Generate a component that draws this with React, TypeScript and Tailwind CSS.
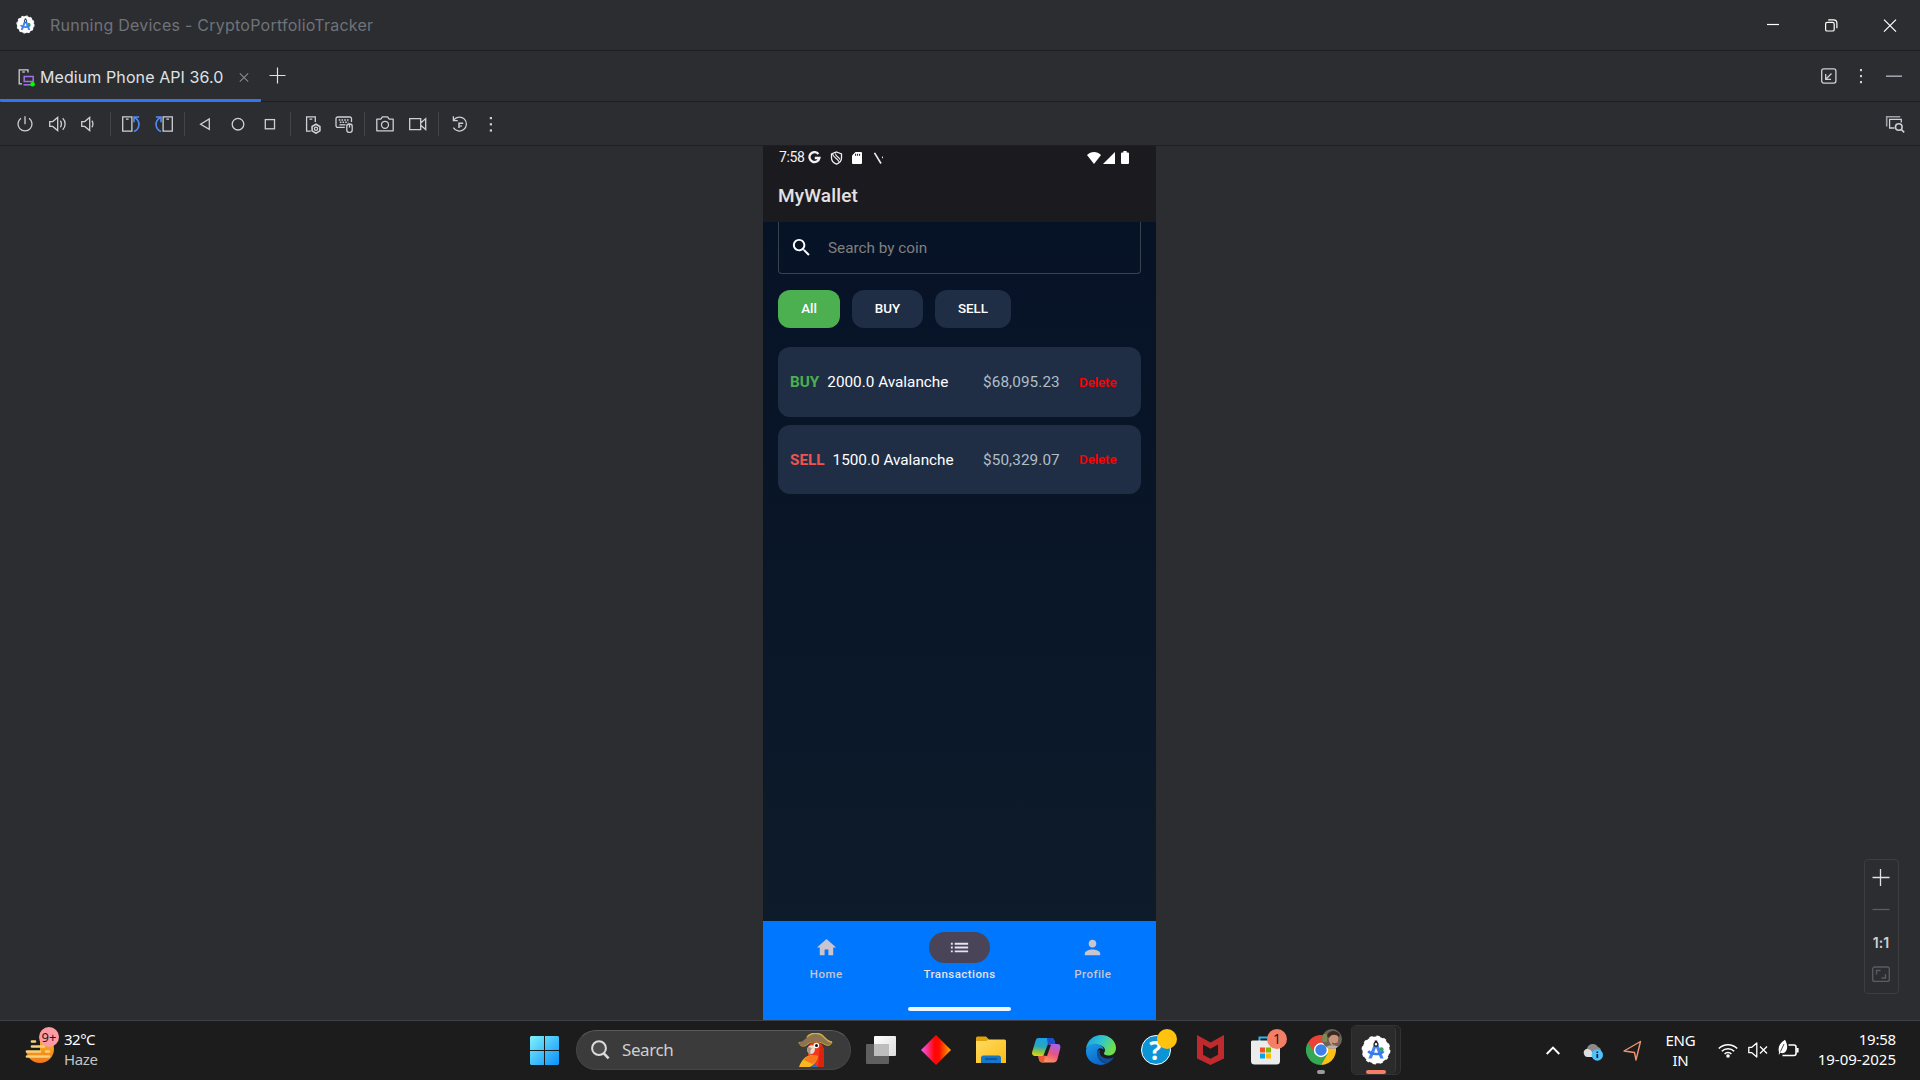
import React from "react";

type IconProps = { className?: string; children: React.ReactNode; size?: number };

/* Stroke icon on a 20px grid, used across the IDE chrome */
function Ico({ className = "", children, size = 20 }: IconProps) {
  return (
    <svg
      className={"shrink-0 " + className}
      width={size}
      height={size}
      viewBox={`0 0 ${size} ${size}`}
      fill="none"
      stroke="#ced0d6"
      strokeWidth={1.3}
    >
      {children}
    </svg>
  );
}

function Material({ d, fill, className = "" }: { d: string; fill: string; className?: string }) {
  return (
    <svg className={"shrink-0 " + className} width="23" height="23" viewBox="0 0 24 24" fill={fill}>
      <path d={d} />
    </svg>
  );
}

const HOME = "M10 20v-6h4v6h5v-8h3L12 3 2 12h3v8z";
const LIST =
  "M3 13h2v-2H3v2zm0 4h2v-2H3v2zm0-8h2V7H3v2zm4 4h14v-2H7v2zm0 4h14v-2H7v2zM7 7v2h14V7H7z";
const PERSON =
  "M12 12c2.21 0 4-1.79 4-4s-1.79-4-4-4-4 1.79-4 4 1.79 4 4 4zm0 2c-2.67 0-8 1.34-8 4v2h16v-2c0-2.66-5.33-4-8-4z";
const SEARCH =
  "M15.5 14h-.79l-.28-.27C15.41 12.59 16 11.11 16 9.5 16 5.91 13.09 3 9.5 3S3 5.91 3 9.5 5.91 16 9.5 16c1.61 0 3.09-.59 4.23-1.57l.27.28v.79l5 4.99L20.49 19l-4.99-5zm-6 0C7.01 14 5 11.99 5 9.5S7.01 5 9.5 5 14 7.01 14 9.5 11.99 14 9.5 14z";

function StudioLogo({ size }: { size: number }) {
  return (
    <svg className="shrink-0" width={size} height={size} viewBox="0 0 30 30">
      <circle cx="15" cy="15" r="13.6" fill="#fff" />
      <circle cx="15" cy="15" r="13.6" fill="none" stroke="#fff" strokeWidth="1.6" strokeDasharray="3.4 3.72" />
      <circle cx="20.3" cy="14.6" r="2.4" fill="#34a853" />
      <path d="M13.4 8h3.2l6 15.5h-3.4L15 12.5l-4.200 11H7.400z" fill="#4285f4" />
      <path d="M7.200 16.200C10.500 20 19.500 20 22.500 16.200" stroke="#3b78e7" strokeWidth="2.600" fill="none" />
      <path d="M13.700 5.500h2.600v3h-2.600z" fill="#222" />
      <circle cx="15" cy="9.300" r="1.900" fill="#fff" stroke="#222" strokeWidth="1.300" />
    </svg>
  );
}

function TitleBar() {
  return (
    <header className="flex h-[51px] items-center border-b border-[#1e1f22] pb-px pl-[15.5px]">
      <StudioLogo size={19} />
      <span className="ml-[15.5px] text-[16px] tracking-[0.24px] text-[#6f737a]">
        Running Devices - CryptoPortfolioTracker
      </span>
      <div className="ml-auto flex items-center">
        <Ico className="mr-[38px]">
          <path d="M4 9.5h12" stroke="#fff" strokeWidth="1.2" />
        </Ico>
        <Ico className="mr-[39px]">
          <rect x="4.6" y="7.4" width="8.6" height="8.6" rx="1.6" stroke="#fff" strokeWidth="1.2" />
          <path d="M7.2 4.9h5.3a3.4 3.4 0 0 1 3.400 3.400v5" stroke="#fff" strokeWidth="1.2" />
        </Ico>
        <Ico className="mr-[20px]">
          <path d="M4 4.700l12 12M16 4.700l-12 12" stroke="#fff" strokeWidth="1.2" />
        </Ico>
      </div>
    </header>
  );
}

function TabRow() {
  return (
    <div className="flex h-[51px] items-stretch border-b border-[#1e1f22]">
      <div className="-mb-px flex w-[261px] shrink-0 items-center rounded-b-[1px] border-b-[3px] border-[#3574f0] pl-4 pt-[3px]">
        <Ico>
          <path d="M12 5.5V2.8H3.2v14H6" />
          <path d="M6.3 5h2.5" />
          <path d="M8.2 14.5v-5h9v5z" stroke="#a571e6" strokeWidth="1.5" />
          <path d="M7.5 17.8h8" stroke="#a571e6" strokeWidth="1.5" />
          <circle cx="16.6" cy="17.3" r="2.3" fill="#0f0" stroke="none" />
        </Ico>
        <span className="ml-1 whitespace-nowrap text-[16px] tracking-[0.09px] text-[#dfe1e5]">Medium Phone API 36.0</span>
        <Ico className="ml-[10px]">
          <path d="M5.8 6.3l8.4 8.4M14.2 6.3l-8.4 8.4" stroke="#868a91" strokeWidth="1.1" />
        </Ico>
      </div>
      <Ico className="ml-[7px] mt-[14px]">
        <path d="M9.5 2.5v16M1.5 10.5h16" stroke="#dfe1e5" strokeWidth="1.2" />
      </Ico>
      <div className="ml-auto flex items-center">
        <Ico className="mr-[12px]">
          <rect x="2.7" y="2.9" width="14.2" height="14.2" rx="2" />
          <path d="M12.500 7.500l-5.200 5.200M6.700 8v5.300h5.300" />
        </Ico>
        <Ico className="mr-[13px]">
          <g fill="#ced0d6" stroke="none">
            <rect x="9" y="3" width="2" height="2.2" />
            <rect x="9" y="9" width="2" height="2.2" />
            <rect x="9" y="15" width="2" height="2.2" />
          </g>
        </Ico>
        <Ico className="mr-[16px]">
          <path d="M2 10.2h16" stroke="#9da0a8" strokeWidth="1.6" />
        </Ico>
      </div>
    </div>
  );
}

function Sep({ className }: { className: string }) {
  return <div className={"h-6 w-px shrink-0 bg-[#43454a] " + className} />;
}

function Toolbar() {
  return (
    <div className="flex h-[44px] items-center border-b border-[#1e1f22] pl-[15px]">
      <Ico>
        <path d="M6 4.2a7 7 0 1 0 8 0M10 2.3v8" />
      </Ico>
      <Ico className="ml-[13px]">
        <path d="M1.7 7.6h3l5-4.2v13.2l-5-4.2h-3zM12.3 6.8c1.5 1.5 1.5 4.9 0 6.4M14.7 4.2c3.2 3 3.2 8.6 0 11.6" />
      </Ico>
      <Ico className="ml-[10px]">
        <path d="M3.7 7.6h3l5-4.2v13.2l-5-4.2h-3zM13.8 6.8c1.5 1.5 1.5 4.9 0 6.4" />
      </Ico>
      <Sep className="ml-[12px]" />
      <Ico className="ml-[10px]">
        <path d="M1.7 2.8h9.2v14.4H1.7zM5 5.2h2.6" />
        <path d="M13 17.5c6.2-2.6 6.6-10 1-13.8M13 8.2V3h5.2" stroke="#548af7" strokeWidth="1.6" />
      </Ico>
      <Ico className="ml-[13px]">
        <path d="M9.1 2.8h9.2v14.4H9.1zM12.4 5.2H15" />
        <path d="M7 17.5C.8 14.9.4 7.5 6 3.7M7 8.2V3H1.8" stroke="#548af7" strokeWidth="1.6" />
      </Ico>
      <Sep className="ml-[10px]" />
      <Ico className="ml-[10px]">
        <path d="M14.3 5v10.4L5.6 10.2z" />
      </Ico>
      <Ico className="ml-[13px]">
        <circle cx="10" cy="10.2" r="5.8" />
      </Ico>
      <Ico className="ml-[12px]">
        <rect x="5.3" y="5.6" width="9.2" height="9.2" />
      </Ico>
      <Sep className="ml-[10px]" />
      <Ico className="ml-[12px]">
        <path d="M12.3 8V2.8H3.6v14.4h4.2M6.5 5.2h2.8" />
        <path d="M13 10.2l3.9 2.3v4.4L13 19.2l-3.9-2.3v-4.4z" strokeWidth="1.6" />
        <circle cx="13" cy="14.7" r="1.6" />
      </Ico>
      <Ico className="ml-[11px]">
        <path d="M17.5 8V4.6a1.6 1.6 0 0 0-1.6-1.6H3.6A1.6 1.6 0 0 0 2 4.6v7.2a1.6 1.6 0 0 0 1.6 1.6h7.2" />
        <path d="M4.8 5.9h10.5M5.8 8.2h8.5" strokeDasharray="1.6 1.1" strokeWidth="1.5" />
        <path d="M5.5 10.8h6" />
        <rect x="12.8" y="10" width="5.4" height="8.3" rx="2.2" />
        <path d="M15.5 10v3.6" />
      </Ico>
      <Sep className="ml-[10px]" />
      <Ico className="ml-[10px]">
        <path d="M1.8 5.2h4l1.6-2.4h5.2l1.6 2.4h4v11.6H1.8z" strokeLinejoin="round" />
        <circle cx="10" cy="10.8" r="3.5" />
      </Ico>
      <Ico className="ml-[13px]">
        <path d="M1.7 4.6h11v11H1.7zM12.7 9l5-4.4v11l-5-4.4" />
      </Ico>
      <Sep className="ml-[10px]" />
      <Ico className="ml-[11px]">
        <path d="M4 5.6a7 7 0 1 1-.6 8M3.4 2.2v4.4h4.4" />
        <path d="M9 14V9.300h4.200" strokeWidth="1.5" />
        <path d="M9.500 12h2.500" strokeWidth="1.200" />
      </Ico>
      <Ico className="ml-[11px]">
        <g fill="#ced0d6" stroke="none">
          <rect x="8.8" y="3" width="2.2" height="2.2" />
          <rect x="8.8" y="9.2" width="2.2" height="2.2" />
          <rect x="8.8" y="15.4" width="2.2" height="2.2" />
        </g>
      </Ico>
      <Ico className="ml-auto mr-[15px]">
        <path d="M1.7 12.5V2.8h13.6" stroke="#9da0a8" strokeWidth="1.6" />
        <path d="M9.5 14H4.6V5.4h11.7v3.2" />
        <circle cx="13.8" cy="13" r="3.3" strokeWidth="1.6" />
        <path d="M16.2 15.4l3 3" strokeWidth="1.6" />
      </Ico>
    </div>
  );
}

function StatusBar() {
  return (
    <div className="flex h-[23px] items-center pl-4 text-[14px] text-[#f2f2f2]">
      <span className="w-[28px] tracking-[-0.4px]">7:58</span>
      <svg className="ml-px" width="13" height="13" viewBox="0 0 13 13" fill="none" stroke="#f2f2f2" strokeWidth="2.3">
        <path d="M10.4 3A5 5 0 1 0 11.4 7H6.8" />
      </svg>
      <svg className="ml-[9px]" width="13" height="14" viewBox="0 0 13 14" fill="none" stroke="#f2f2f2" strokeWidth="1.3">
        <path d="M6.5 1l5 1.9v4c0 3-2 5-5 6.2-3-1.2-5-3.2-5-6.2v-4z" />
        <path d="M2.5 2.800c1 4 4.500 4 6.500 8M5.500 2.500c0 3 3 3 4.500 6" strokeWidth="1.100" />
      </svg>
      <svg className="ml-[9px]" width="10" height="12" viewBox="0 0 10 12" fill="#fff">
        <path d="M3.5 0H9a1 1 0 0 1 1 1v10a1 1 0 0 1-1 1H1a1 1 0 0 1-1-1V3.6z" />
        <path d="M3.6 1.8v2M5.6 1.8v2M7.6 1.8v2" stroke="#1b1b1f" strokeWidth="1" />
      </svg>
      <svg className="ml-[12px]" width="10" height="12" viewBox="0 0 10 12" stroke="#eee" fill="none">
        <path d="M.5.8L7 11.5" strokeWidth="1.6" />
        <path d="M8.5 4.6v1.6" strokeWidth="1" />
      </svg>
      <svg className="ml-auto" width="14" height="12" viewBox="0 0 14 12" fill="#fff">
        <path d="M0 3C4 -1 10 -1 14 3L7 12z" />
      </svg>
      <svg className="ml-[2px]" width="12" height="12" viewBox="0 0 12 12" fill="#fff">
        <path d="M12 0v12H0z" />
      </svg>
      <svg className="ml-[6px] mr-[27px]" width="8" height="13" viewBox="0 0 8 13" fill="#fff">
        <path d="M2.4 0h3.2v1.4H7a1 1 0 0 1 1 1V12a1 1 0 0 1-1 1H1a1 1 0 0 1-1-1V2.4a1 1 0 0 1 1-1h1.4z" />
      </svg>
    </div>
  );
}

function Row({ kind, color, text, price }: { kind: string; color: string; text: string; price: string }) {
  return (
    <div className="flex h-[69.5px] items-center rounded-[12px] bg-[#1f2e45] pl-[12px] pr-[24px] pt-[2px] text-[15.3px]">
      <span className={"font-bold " + color}>{kind}</span>
      <span className="ml-2 text-white">{text}</span>
      <span className="ml-auto w-[96px] tracking-[0.1px] text-[#b0bec5]">{price}</span>
      <span className="w-[38px] text-[13.4px] font-medium tracking-[-0.1px] text-[#ff0000]">Delete</span>
    </div>
  );
}

function NavItem({ d, label, active }: { d: string; label: string; active?: boolean }) {
  return (
    <div className="flex flex-1 flex-col items-center pt-[11px]">
      <div
        className={
          active
            ? "flex h-[31px] w-[61px] items-center justify-center rounded-full bg-[#4a4458]"
            : "flex h-[31px] w-[61px] items-center justify-center"
        }
      >
        <Material d={d} fill={active ? "#e8def8" : "#cac4d0"} />
      </div>
      <span
        className={
          active
            ? "mt-[3px] text-[11.5px] leading-4 font-medium tracking-[0.45px] text-[#e6e1e5]"
            : "mt-[3px] text-[11.5px] leading-4 font-medium tracking-[0.45px] text-[#cac4d0]"
        }
      >
        {label}
      </span>
    </div>
  );
}

function Phone() {
  return (
    <div className="flex h-[874px] w-[393px] flex-col bg-gradient-to-b from-[#061125] to-[#0e1c2b] font-['Roboto',sans-serif]">
      <div className="h-[76px] bg-[#1b1b1f]">
        <StatusBar />
        <div className="flex h-[55px] items-center pl-[15px] text-[19px] font-medium tracking-[0.15px] text-[#e4e2e6]">
          MyWallet
        </div>
      </div>
      <div className="flex flex-1 flex-col px-[15px]">
        <div className="flex h-[52px] items-center rounded-b-[4px] border border-t-0 border-[#37434f] pl-[11px]">
          <Material d={SEARCH} fill="#fff" />
          <span className="ml-[15px] pt-[2px] text-[15.3px] text-[#808080]">Search by coin</span>
        </div>
        <div className="mt-4 flex gap-3 text-[13.4px] font-medium text-white">
          <div className="flex h-[38px] w-[62px] items-center justify-center rounded-[12px] bg-[#4caf50]">All</div>
          <div className="flex h-[38px] w-[71px] items-center justify-center rounded-[12px] bg-[#1f2e45]">BUY</div>
          <div className="flex h-[38px] w-[76px] items-center justify-center rounded-[12px] bg-[#1f2e45]">SELL</div>
        </div>
        <div className="mt-[19px] flex flex-col gap-[8px]">
          <Row kind="BUY" color="text-[#4caf50]" text="2000.0 Avalanche" price="$68,095.23" />
          <Row kind="SELL" color="text-[#ef5350]" text="1500.0 Avalanche" price="$50,329.07" />
        </div>
      </div>
      <nav className="flex h-[99px] flex-col bg-[#0077ff]">
        <div className="flex gap-[7px]">
          <NavItem d={HOME} label="Home" />
          <NavItem d={LIST} label="Transactions" active />
          <NavItem d={PERSON} label="Profile" />
        </div>
        <div className="mt-auto mb-[9px] h-[4px] w-[103px] self-center rounded-full bg-[#eef5ff]" />
      </nav>
    </div>
  );
}

function ZoomPanel() {
  return (
    <div className="flex h-[135px] w-[35px] flex-col items-center rounded-[4px] border border-[#3c3e42]">
      <Ico className="mt-[7px] mr-px">
        <path d="M9.5 2v17M1.5 10.5h17" stroke="#dfe1e5" />
      </Ico>
      <Ico className="mt-[12px] mr-px">
        <path d="M1.5 10.5h17" stroke="#5a5d63" />
      </Ico>
      <span className="mt-[14px] mr-px text-[14px] leading-5 font-semibold tracking-[0.1px] text-[#ced0d6]">1:1</span>
      <Ico className="mt-[12px] mr-px">
        <rect x="1.7" y="2" width="16.6" height="14.4" rx="2" stroke="#5a5d63" />
        <path d="M5.5 9.5v-4h4M14.5 9v4h-4" stroke="#5a5d63" />
      </Ico>
    </div>
  );
}

function Cell({ children }: { children: React.ReactNode }) {
  return <div className="flex h-full w-[55px] shrink-0 items-center justify-center">{children}</div>;
}

function Parrot() {
  return (
    <svg className="ml-auto mr-[17px]" width="35" height="34" viewBox="0 0 35 34">
      <path d="M10 14c2-6 14-7 15 1l1 19H10z" fill="#f4371c" />
      <path d="M22 12l4 3v19h-6z" fill="#d92410" />
      <path d="M1 34C4 25 10 20 20 23c-1 6-5 9-8 11z" fill="#f9b81d" />
      <path d="M6 27c3-4 8-6 14-4-1 4-3 7-6 8z" fill="#f8791c" />
      <path d="M12 34l5-3 3 3z" fill="#2d6fb5" />
      <path d="M10 14c3-3 7-2 7 2 0 3-2 5-4 5-3 0-5-4-3-7z" fill="#e8dccb" />
      <path d="M10 14c-2 3 0 7 3 8-1-3-1-5 1-7z" fill="#a8977c" />
      <circle cx="18.3" cy="12.5" r="2.8" fill="#fff" />
      <circle cx="18.5" cy="12.5" r="1.5" fill="#111" />
      <path d="M1 9c4 0 6-3 8-5 4-5 13-5 17 0 2 2 4 5 8 5-1 4-5 5-8 2-5-4-12-4-16 0-3 3-8 2-9-2z" fill="#8d7352" />
      <path d="M9 4c4-5 13-5 17 0 2 2 4 5 8 5" stroke="#d8b13c" strokeWidth="1.3" fill="none" />
      <path d="M1 9c0 4 5 6 9 2 4-3 11-3 16 0 3 2 7 2 8-2" stroke="#c9a13a" strokeWidth="1" fill="none" />
    </svg>
  );
}

function Taskbar() {
  return (
    <footer className="relative flex h-[60px] items-center border-t border-[#3f4043] bg-[#1c1c1c] pb-px font-['Noto_Sans',sans-serif] text-[15px] text-white">
      <div className="relative ml-[24px] h-[40px] w-[36px]">
        <svg width="36" height="40" viewBox="0 0 36 40">
          <defs>
            <linearGradient id="sun" x1="0" y1="0" x2="0" y2="1">
              <stop offset="0" stopColor="#fbc21a" />
              <stop offset="1" stopColor="#f2761c" />
            </linearGradient>
          </defs>
          <circle cx="16" cy="19" r="14" fill="url(#sun)" />
          <path d="M0 4h16v17H0z" fill="#1c1c1c" />
          <path d="M8 11.5h3M8 16.500h12M3 21.500h13M22 21.500h3M3 26.500h22" stroke="#f3d27c" strokeWidth="2.7" strokeLinecap="round" />
        </svg>
        <span className="absolute left-[15px] top-[-3px] flex h-5 w-5 items-center justify-center rounded-full bg-[#ff99a4] text-[13px] leading-none text-[#1c1c1c]">
          9+
        </span>
      </div>
      <div className="mb-[3px] ml-[4px] w-[60px] leading-[20px]">
        <div className="tracking-[-0.500px]">32°C</div>
        <div className="tracking-[-0.400px] text-[#c4c4c4]">Haze</div>
      </div>

      <svg className="ml-[406px] shrink-0" width="29" height="29" viewBox="0 0 29 29">
        <defs>
          <linearGradient id="win" x1="0" y1="0" x2="1" y2="1">
            <stop offset="0" stopColor="#7ff3fb" />
            <stop offset="1" stopColor="#0a8ffb" />
          </linearGradient>
        </defs>
        <path d="M1 0h13v14H0V1zM15 0h13l1 1v13H15zM0 15h14v14H1l-1-1zM15 15h14v13l-1 1H15z" fill="url(#win)" />
      </svg>

      <div className="ml-[17px] flex h-[40px] w-[275px] shrink-0 items-center rounded-full border border-t-[#5a5a5a] border-[#464646] bg-[#3b3b3b] pl-[14px]">
        <svg width="19" height="20" viewBox="0 0 19 20" fill="none" stroke="#dcdcdc">
          <circle cx="8" cy="8.2" r="6.9" strokeWidth="2" fill="#4c4c4c" />
          <path d="M12.8 13.4l4.8 5" strokeWidth="2.6" />
        </svg>
        <span className="ml-[12px] text-[17px] tracking-[-0.4px] text-[#cfcfcf]">Search</span>
        <Parrot />
      </div>

      <div className="ml-[2px] flex h-full shrink-0 items-center">
        <Cell>
          <svg width="30" height="28" viewBox="0 0 30 28">
            <defs>
              <linearGradient id="tv" x1="0" y1="0" x2="1" y2="1">
                <stop offset="0" stopColor="#fff" />
                <stop offset="1" stopColor="#dcdcdc" />
              </linearGradient>
            </defs>
            <rect x="8" y="0" width="22" height="20" rx="1" fill="url(#tv)" />
            <rect x="0" y="8" width="23" height="20" rx="1" fill="#5f5f5f" />
            <path d="M8 8h15v12H8z" fill="#bdbdbd" />
          </svg>
        </Cell>
        <Cell>
          <svg width="30" height="30" viewBox="0 0 30 30">
            <defs>
              <linearGradient id="dia" x1="0" y1="0" x2="1" y2="0">
                <stop offset="0" stopColor="#f25cff" />
                <stop offset="0.45" stopColor="#ff0505" />
                <stop offset="0.6" stopColor="#ff0a00" />
                <stop offset="1" stopColor="#ffb300" />
              </linearGradient>
            </defs>
            <path d="M15 0l15 15-15 15L0 15z" fill="url(#dia)" />
          </svg>
        </Cell>
        <Cell>
          <svg width="30" height="28" viewBox="0 0 30 28">
            <defs>
              <linearGradient id="fold" x1="0" y1="0" x2="1" y2="1">
                <stop offset="0" stopColor="#ffdb63" />
                <stop offset="1" stopColor="#fbbc14" />
              </linearGradient>
            </defs>
            <path d="M0 2a1.5 1.5 0 0 1 1.500-1.500h8.500l3 3v4H0z" fill="#e0a106" />
            <path d="M0 5h10l3-1.500h15.500a1.500 1.500 0 0 1 1.500 1.500V27H0z" fill="url(#fold)" />
            <path d="M5 27v-5a2.500 2.500 0 0 1 2.500-2.500h15a2.500 2.500 0 0 1 2.500 2.500v5z" fill="#1577c9" />
            <path d="M9 23h12" stroke="#0b4a86" strokeWidth="1.400" />
          </svg>
        </Cell>
        <Cell>
          <svg className="ml-px" width="29" height="26" viewBox="0 0 29 26">
            <defs>
              <linearGradient id="cpa" x1="0.3" y1="0" x2="0.1" y2="1">
                <stop offset="0" stopColor="#1aa0ea" />
                <stop offset="0.45" stopColor="#2aa7b8" />
                <stop offset="0.75" stopColor="#8cc63f" />
                <stop offset="1" stopColor="#f7d00a" />
              </linearGradient>
              <linearGradient id="cpb" x1="0.8" y1="0" x2="0.3" y2="1">
                <stop offset="0" stopColor="#a660f0" />
                <stop offset="0.5" stopColor="#e8557d" />
                <stop offset="1" stopColor="#ffa05a" />
              </linearGradient>
            </defs>
            <path d="M6 1h13c2 0 3 1 3.500 3l.8 3h-4c-2 0-3 1-3.600 3L13 17c-.7 2-1.500 2-3.500 2H3c-2.500 0-3.500-2-2.700-4.500L3.500 4C4 2 5 1 6 1z" fill="url(#cpa)" />
            <path d="M15 1h4c2 0 3 1 3.500 3l.8 3h-4c-1.600 0-2.600.6-3.300 2z" fill="#1d4fd0" />
            <path d="M19 7h6.500c2.500 0 3.500 2 2.700 4.500L25.500 22c-.6 2.500-2 3.500-4 3.500H10.500c-2 0-3-1-3.500-3L6.300 19H10c2 0 3-1 3.500-3L16 9c.5-1.500 1.500-2 3-2z" fill="url(#cpb)" />
            <path d="M6.300 19H10c1.600 0 2.600-.7 3.200-2l-1.200 8.500h-1.500c-2 0-3-1-3.500-3z" fill="#ee5a37" />
            <path d="M15.800 7.500l3.200.3L15 19 11.500 18.500z" fill="#1c1c1c" />
          </svg>
        </Cell>
        <Cell>
          <svg width="30" height="30" viewBox="0 0 30 30">
            <defs>
              <linearGradient id="edg" x1="0" y1="0" x2="1" y2="0.4">
                <stop offset="0" stopColor="#1c9be0" />
                <stop offset="0.55" stopColor="#2fc5cf" />
                <stop offset="1" stopColor="#6fe04a" />
              </linearGradient>
              <linearGradient id="edb" x1="0" y1="0" x2="0.5" y2="1">
                <stop offset="0" stopColor="#1a9de8" />
                <stop offset="1" stopColor="#0b66c9" />
              </linearGradient>
            </defs>
            <path d="M0 14C1 5 8 0 15 0c9 0 15 6.500 15 13 0 5-3.500 7.500-7.500 7.500-3.500 0-5-1.500-4.500-2.500 2-2.500 1-6-3-7.500C9 8.500 3 9.500 0 14z" fill="url(#edg)" />
            <path d="M0 15C1.500 9.500 8 7.500 13 9.500c3 1.200 4.500 3 4.500 5-4-3-7 0-6.500 4C11.500 24 16 28 21 28.500 11 33-1 26 0 15z" fill="url(#edb)" />
            <path d="M11 17c-.5 6 5 10 10 11.500 3-1.500 5.500-3.500 7-6.500-3.500 2-8 2-11 .3-3-1.600-4-4.300-3-7.300-1.500.3-2.700 1-3 2z" fill="#114f9e" />
          </svg>
        </Cell>
        <Cell>
          <div className="relative h-[30px] w-[30px]">
            <div className="flex h-full w-full items-center justify-center rounded-full border-[1.5px] border-white bg-[#0b95d6] font-['Open_Sans',sans-serif] text-[26px] leading-none font-bold">
              ?
            </div>
            <div className="absolute left-4 top-[-6px] h-5 w-5 rounded-full bg-[#ffc20e]" />
          </div>
        </Cell>
        <Cell>
          <svg width="27" height="30" viewBox="0 0 27 30">
            <path d="M0 0l13.500 7.500L27 0v23.500L13.500 30 0 23.500zM6 9.500v10.200l7.500 4 7.500-4V9.500l-7.500 4.300z" fill="#bf2a2e" fillRule="evenodd" />
          </svg>
        </Cell>
        <Cell>
          <div className="relative h-[30px] w-[29px]">
            <svg width="29" height="30" viewBox="0 0 29 30">
              <path d="M8.500 7V2.500h12V7" fill="none" stroke="#30b4f0" strokeWidth="2" />
              <path d="M1 5.500h27l1 1V26a3.500 3.500 0 0 1-3.500 3.500h-22A3.500 3.500 0 0 1 0 26V6.500z" fill="#ececec" />
              <path d="M9 12.500h5v5H9z" fill="#f25022" />
              <path d="M15 12.500h5v5h-5z" fill="#7fba00" />
              <path d="M9 18.500h5v5H9z" fill="#00a4ef" />
              <path d="M15 18.500h5v5h-5z" fill="#ffb900" />
            </svg>
            <span className="absolute left-4 top-[-6px] flex h-5 w-5 items-center justify-center rounded-full bg-[#f47f66] text-[14px] leading-none text-[#1c1c1c]">
              1
            </span>
          </div>
        </Cell>
        <Cell>
          <div className="relative h-[30px] w-[30px]">
            <svg width="30" height="30" viewBox="0 0 30 30">
              <path d="M15 15L2 7.500A15 15 0 0 0 15 30l6.500-11.300z" fill="#34a853" />
              <path d="M15 8h13.300A15 15 0 0 1 15 30l6.500-11.300z" fill="#fbc116" />
              <path d="M2 7.500A15 15 0 0 1 28.300 8H15a7 7 0 0 0-6.300 10.500z" fill="#ea4335" />
              <circle cx="15" cy="15" r="7.200" fill="#fff" />
              <circle cx="15" cy="15" r="5.700" fill="#3f7fe8" />
            </svg>
            <svg className="absolute left-[16px] top-[-6px]" width="20" height="20" viewBox="0 0 20 20">
              <clipPath id="av">
                <circle cx="10" cy="10" r="10" />
              </clipPath>
              <g clipPath="url(#av)">
                <path d="M0 0h20v20H0z" fill="#6d6258" />
                <path d="M0 5h5v8H0z" fill="#7d8a55" />
                <ellipse cx="11.500" cy="10" rx="4.800" ry="6.500" fill="#c9947a" />
                <path d="M5 7c1-6 10-7 13-1l-1 2c-3-3-8-3-10 1z" fill="#3a2a26" />
                <path d="M3 20c2-5 10-4 14-2v2z" fill="#b9aeb0" />
                <path d="M10 13.500c2 1.500 3 1.500 5 0l-1 2h-3z" fill="#4a2e28" />
              </g>
            </svg>
            <div className="absolute left-[11px] top-[35px] h-1 w-2 rounded-full bg-[#9a9a9a]" />
          </div>
        </Cell>
        <Cell>
          <div className="relative flex h-[50px] w-[50px] shrink-0 rounded-[5px] border border-[#333] bg-[#242424]">
            <div className="flex h-full w-[44px] items-center justify-center rounded-[5px] border-r border-[#3a3a3a] bg-[#2b2b2b] pl-[5px]">
              <StudioLogo size={30} />
            </div>
            <div className="absolute left-[14px] top-[44px] h-1 w-5 rounded-full bg-[#f47f66]" />
          </div>
        </Cell>
      </div>

      <div className="ml-auto flex h-full items-center pr-[24px]">
        <svg width="14" height="9" viewBox="0 0 14 9" fill="none" stroke="#fff" strokeWidth="1.900">
          <path d="M.7 8L7 1.500 13.300 8" />
        </svg>
        <svg className="ml-[23px] mt-1" width="20" height="18" viewBox="0 0 20 18">
          <path d="M4.500 13A4 4 0 0 1 4 5.500 6 6 0 0 1 15 4c3 1 4 4 2 7z" fill="#8b8b8b" />
          <path d="M1 11c-1-3 1-5 3.500-5 2 0 4 1.500 5 4v4H4.500C2.500 14 1.500 13 1 11z" fill="#dedede" />
          <circle cx="14.300" cy="12" r="5.700" fill="#4cc2ff" />
          <path d="M14.300 11v4M14.300 8.500v1.500" stroke="#10222e" strokeWidth="1.700" />
        </svg>
        <svg className="ml-[20px]" width="19" height="21" viewBox="0 0 19 21" fill="none" stroke="#ee9473" strokeWidth="1.400">
          <path d="M17.500 1.500L1 11l10.500 1.500L13 20z" strokeLinejoin="round" />
        </svg>
        <div className="mb-px ml-[18px] w-[41px] text-center leading-[20px] tracking-[-0.200px]">
          <div>ENG</div>
          <div>IN</div>
        </div>
        <svg className="ml-[17px]" width="20" height="16" viewBox="0 0 20 16" fill="none" stroke="#fff" strokeWidth="1.500">
          <path d="M.8 6.500a13 13 0 0 1 18.400 0M3.800 9.300a8.700 8.700 0 0 1 12.400 0M6.600 12a4.800 4.800 0 0 1 6.800 0" />
          <circle cx="10" cy="14" r="1.800" fill="#fff" stroke="none" />
        </svg>
        <svg className="ml-[10px]" width="20" height="16" viewBox="0 0 20 16" fill="none" stroke="#fff" strokeWidth="1.300">
          <path d="M.8 5.300h3L8.800 1v14l-5-4.300h-3z" strokeLinejoin="round" />
          <path d="M12 4.500l7 7M19 4.500l-7 7" />
        </svg>
        <svg className="ml-[10px] mt-[-4px]" width="21" height="18" viewBox="0 0 21 18" fill="none" stroke="#fff" strokeWidth="1.600">
          <path d="M10.500 6h5.500a2 2 0 0 1 2 2v6.500a2 2 0 0 1-2 2H4.500" />
          <path d="M19.500 9v4.500" strokeWidth="2.200" />
          <path d="M1 13C-.5 8 2 4 7 .8c2.500 4 3 9 .5 12-2 2-4 1.500-5 .7L.8 16z" fill="#fff" stroke="none" />
          <path d="M6 5L2.500 12.500" stroke="#1c1c1c" strokeWidth="0.800" />
        </svg>
        <div className="mb-[3px] ml-[17px] w-[80px] text-right leading-[20px]">
          <div className="tracking-[-0.200px]">19:58</div>
          <div>19-09-2025</div>
        </div>
      </div>
    </footer>
  );
}

export default function App() {
  return (
    <div className="flex h-[1080px] w-[1920px] flex-col overflow-hidden bg-[#2b2d30] font-['Inter',sans-serif]">
      <TitleBar />
      <TabRow />
      <Toolbar />
      <main className="flex h-[874px] shrink-0">
        <div className="w-[763px] shrink-0" />
        <Phone />
        <div className="flex flex-1 items-end justify-end pb-[26px] pr-[21px]">
          <ZoomPanel />
        </div>
      </main>
      <Taskbar />
    </div>
  );
}
